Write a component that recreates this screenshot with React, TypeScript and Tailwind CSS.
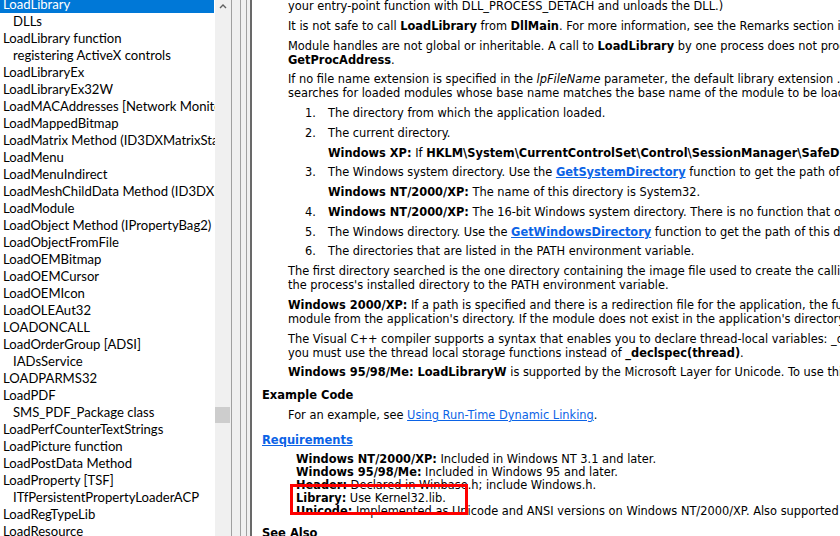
import type { ReactNode } from "react";

const indexItems: { label: string; sub?: boolean }[] = [
  { label: "LoadLibrary" },
  { label: "DLLs", sub: true },
  { label: "LoadLibrary function" },
  { label: "registering ActiveX controls", sub: true },
  { label: "LoadLibraryEx" },
  { label: "LoadLibraryEx32W" },
  { label: "LoadMACAddresses [Network Monitor]" },
  { label: "LoadMappedBitmap" },
  { label: "LoadMatrix Method (ID3DXMatrixStack)" },
  { label: "LoadMenu" },
  { label: "LoadMenuIndirect" },
  { label: "LoadMeshChildData Method (ID3DXLoadUserData)" },
  { label: "LoadModule" },
  { label: "LoadObject Method (IPropertyBag2)" },
  { label: "LoadObjectFromFile" },
  { label: "LoadOEMBitmap" },
  { label: "LoadOEMCursor" },
  { label: "LoadOEMIcon" },
  { label: "LoadOLEAut32" },
  { label: "LOADONCALL" },
  { label: "LoadOrderGroup [ADSI]" },
  { label: "IADsService", sub: true },
  { label: "LOADPARMS32" },
  { label: "LoadPDF" },
  { label: "SMS_PDF_Package class", sub: true },
  { label: "LoadPerfCounterTextStrings" },
  { label: "LoadPicture function" },
  { label: "LoadPostData Method" },
  { label: "LoadProperty [TSF]" },
  { label: "ITfPersistentPropertyLoaderACP", sub: true },
  { label: "LoadRegTypeLib" },
  { label: "LoadResource" },
];

const Link = ({ children, bold }: { children: ReactNode; bold?: boolean }) => (
  <span className={`text-[#0b63e6] underline ${bold ? "font-bold" : ""}`}>{children}</span>
);

const Para = ({ children }: { children: ReactNode }) => (
  <div className="mt-[5.75px] pl-[36px]">{children}</div>
);

const Item = ({ n, children }: { n: number; children: ReactNode }) => (
  <div className="mt-[5.75px] flex pl-[53px]">
    <span className="w-[23px] shrink-0">{n}.</span>
    <span>{children}</span>
  </div>
);

const Sub = ({ children }: { children: ReactNode }) => (
  <div className="mt-[5.75px] pl-[76px]">{children}</div>
);

export default function App() {
  return (
    <div className="flex h-[536px] w-[840px] overflow-hidden bg-white text-black">
      {/* index pane */}
      <div className="flex h-full w-[231px] shrink-0">
        <div className="h-full w-[215px] overflow-hidden bg-white font-['Lato','Noto_Sans',sans-serif] text-[13.1px]">
          <div className="-mt-[4px]">
            {indexItems.map((item, index) => (
              <div
                key={`idx-${index}`}
                className={`h-[17px] whitespace-nowrap leading-[17px] ${item.sub ? "pl-[13px]" : "pl-[3px]"} ${
                  index === 0 ? "w-[214px] bg-[#0078d7] text-white" : ""
                }`}
              >
                {item.label}
              </div>
            ))}
          </div>
        </div>
        <div className="relative h-full w-[16px] bg-[#f0f0f0]">
          <svg className="absolute left-[4px] top-[3px]" width="8" height="6" viewBox="0 0 8 6">
            <path d="M1 5 L4 2 L7 5" fill="none" stroke="#606060" strokeWidth="1.4" />
          </svg>
          <div className="absolute left-0 top-[407px] h-[16px] w-[15px] bg-[#cdcdcd]" />
        </div>
      </div>

      {/* splitter */}
      <div className="flex h-full w-[21px] shrink-0 bg-[#f0f0f0]">
        <div className="w-[1px] bg-[#a0a0a0]" />
        <div className="w-[8px]" />
        <div className="w-[1px] bg-[#a0a0a0]" />
        <div className="w-[5px]" />
        <div className="w-[1px] bg-[#a0a0a0]" />
        <div className="w-[3px]" />
        <div className="w-[2px] bg-[#696969]" />
      </div>

      {/* topic pane */}
      <div className="relative h-full flex-1 overflow-hidden bg-white font-['DejaVu_Sans','Liberation_Sans',sans-serif] text-[11.4px] leading-[14px]">
        <div className="-mt-[6.6px] whitespace-nowrap">
          <Para>your entry-point function with DLL_PROCESS_DETACH and unloads the DLL.)</Para>
          <Para>
            It is not safe to call <b>LoadLibrary</b> from <b>DllMain</b>. For more information, see the Remarks section in <b>DllMain</b>.
          </Para>
          <Para>
            <div>
              Module handles are not global or inheritable. A call to <b>LoadLibrary</b> by one process does not produce a handle that another process can use — for example, in calling
            </div>
            <div>
              <b>GetProcAddress</b>.
            </div>
          </Para>
          <Para>
            <div>
              If no file name extension is specified in the <i>lpFileName</i> parameter, the default library extension .DLL is appended. However, the file name string can include a trailing point
            </div>
            <div>
              searches for loaded modules whose base name matches the base name of the module to be loaded. If the name matches, the load succeeds.
            </div>
          </Para>
          <Item n={1}>The directory from which the application loaded.</Item>
          <Item n={2}>The current directory.</Item>
          <Sub>
            <b>Windows XP:</b> If <b>HKLM\System\CurrentControlSet\Control\SessionManager\SafeDllSearchMode</b> is 1, the current directory is searched last.
          </Sub>
          <Item n={3}>
            The Windows system directory. Use the <Link bold>GetSystemDirectory</Link> function to get the path of this directory.
          </Item>
          <Sub>
            <b>Windows NT/2000/XP:</b> The name of this directory is System32.
          </Sub>
          <Item n={4}>
            <b>Windows NT/2000/XP:</b> The 16-bit Windows system directory. There is no function that obtains the path of this directory.
          </Item>
          <Item n={5}>
            The Windows directory. Use the <Link bold>GetWindowsDirectory</Link> function to get the path of this directory.
          </Item>
          <Item n={6}>The directories that are listed in the PATH environment variable.</Item>
          <Para>
            <div>
              The first directory searched is the one directory containing the image file used to create the calling process (for more information, see the
            </div>
            <div>the process's installed directory to the PATH environment variable.</div>
          </Para>
          <Para>
            <div>
              <b>Windows 2000/XP:</b> If a path is specified and there is a redirection file for the application, the function searches for the module in the
            </div>
            <div>module from the application's directory. If the module does not exist in the application's directory, LoadLibrary loads the module.</div>
          </Para>
          <Para>
            <div>
              The Visual C++ compiler supports a syntax that enables you to declare thread-local variables: _declspec(thread). If you use this syntax in a DLL,
            </div>
            <div>
              you must use the thread local storage functions instead of <b>_declspec(thread)</b>.
            </div>
          </Para>
          <Para>
            <b>Windows 95/98/Me: LoadLibraryW</b> is supported by the Microsoft Layer for Unicode. To use this, you must add certain files to your application.
          </Para>

          <div className="mt-[9px] pl-[10px] text-[11.5px] font-bold">Example Code</div>
          <Para>
            For an example, see <Link>Using Run-Time Dynamic Linking</Link>.
          </Para>

          <div className="mt-[11px] pl-[10px] text-[11.5px]">
            <Link bold>Requirements</Link>
          </div>
          <div className="mt-[6px] pl-[44px] leading-[13px]">
            <div>
              <b>Windows NT/2000/XP:</b> Included in Windows NT 3.1 and later.
            </div>
            <div>
              <b>Windows 95/98/Me:</b> Included in Windows 95 and later.
            </div>
            <div>
              <b>Header:</b> Declared in Winbase.h; include Windows.h.
            </div>
            <div>
              <b>Library:</b> Use Kernel32.lib.
            </div>
            <div>
              <b>Unicode:</b> Implemented as Unicode and ANSI versions on Windows NT/2000/XP. Also supported by Microsoft Layer for Unicode.
            </div>
          </div>

          <div className="mt-[8px] pl-[10px] text-[11.5px] font-bold">See Also</div>
        </div>

        {/* annotation box */}
        <div className="absolute left-[38px] top-[484px] h-[31px] w-[178px] border-[3px] border-[#ff0000]" />
      </div>
    </div>
  );
}
